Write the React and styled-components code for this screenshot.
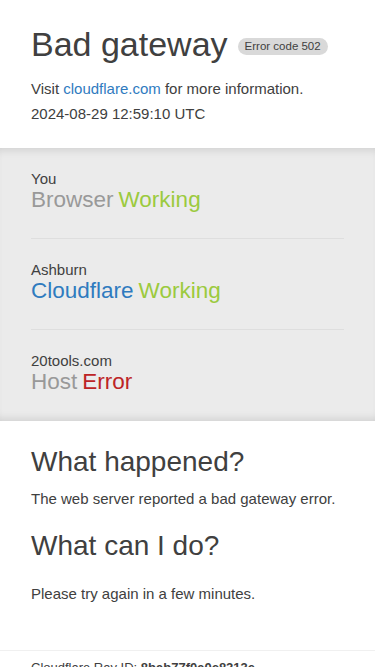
import React from 'react';
import styled, { createGlobalStyle } from 'styled-components';

const GlobalStyle = createGlobalStyle`
  html, body {
    margin: 0;
    padding: 0;
    background: #fff;
  }
  body {
    font-family: "Liberation Sans", Arial, Helvetica, sans-serif;
    color: #404040;
  }
`;

const Header = styled.header`
  padding: 26px 31px 22px;
`;

const Title = styled.h1`
  margin: 0;
  font-size: 34px;
  font-weight: 400;
  line-height: 36px;
  display: flex;
  align-items: center;
  gap: 10px;
`;

const Badge = styled.span`
  background: #d9d9d9;
  border-radius: 9px;
  font-size: 11.5px;
  line-height: 17px;
  padding: 0 7px;
  margin-top: 4px;
`;

const Info = styled.p`
  margin: ${(p) => p.$mt || 0}px 0 0;
  font-size: 15px;
  line-height: 24px;
`;

const Link = styled.a`
  color: #2f7bbf;
  text-decoration: none;
`;

const StatusPanel = styled.section`
  background: #ebebeb;
  box-shadow: inset 0 8px 8px -6px rgba(0, 0, 0, 0.12), inset 0 -8px 8px -6px rgba(0, 0, 0, 0.12);
  padding: 0 31px;
`;

const StatusRow = styled.div`
  padding: 22px 0 ${(p) => (p.$last ? 27 : 26)}px;
  border-bottom: ${(p) => (p.$last ? 'none' : '1px solid #dedede')};
`;

const Location = styled.div`
  font-size: 15px;
  line-height: 18px;
`;

const StatusLine = styled.div`
  font-size: 22.5px;
  line-height: 24px;
  display: flex;
  gap: 5px;
`;

const Name = styled.span`
  color: ${(p) => (p.$blue ? '#2f7bbf' : '#999')};
`;

const State = styled.span`
  color: ${(p) => (p.$error ? '#bd2426' : '#9bca3e')};
`;

const Details = styled.section`
  padding: 25px 31px 45px;
`;

const Heading = styled.h2`
  margin: ${(p) => p.$mt || 0}px 0 0;
  font-size: 28px;
  font-weight: 400;
  line-height: 32px;
`;

const Text = styled.p`
  margin: ${(p) => p.$mt || 10}px 0 0;
  font-size: 15px;
  line-height: 22px;
`;

const Footer = styled.footer`
  border-top: 1px solid #f0f0f0;
  padding: 8px 31px 10px;
  font-size: 13px;
  line-height: 18px;
  color: #404040;
`;

const FooterLine = styled.div`
  white-space: nowrap;
`;

const rows = [
  { place: 'You', name: 'Browser', state: 'Working' },
  { place: 'Ashburn', name: 'Cloudflare', state: 'Working', blue: true },
  { place: '20tools.com', name: 'Host', state: 'Error', error: true },
];

export default function App() {
  return (
    <>
      <GlobalStyle />
      <Header>
        <Title>
          Bad gateway <Badge>Error code 502</Badge>
        </Title>
        <Info $mt={15}>
          Visit <Link href="#">cloudflare.com</Link> for more information.
        </Info>
        <Info $mt={1}>2024-08-29 12:59:10 UTC</Info>
      </Header>
      <StatusPanel>
        {rows.map((r, i) => (
          <StatusRow key={r.place} $last={i === rows.length - 1}>
            <Location>{r.place}</Location>
            <StatusLine>
              <Name $blue={r.blue}>{r.name}</Name>
              <State $error={r.error}>{r.state}</State>
            </StatusLine>
          </StatusRow>
        ))}
      </StatusPanel>
      <Details>
        <Heading>What happened?</Heading>
        <Text>The web server reported a bad gateway error.</Text>
        <Heading $mt={20}>What can I do?</Heading>
        <Text $mt={21}>Please try again in a few minutes.</Text>
      </Details>
      <Footer>
        <FooterLine>
          Cloudflare Ray ID: <strong>8bab77f0a0c8213e</strong>
        </FooterLine>
      </Footer>
    </>
  );
}
